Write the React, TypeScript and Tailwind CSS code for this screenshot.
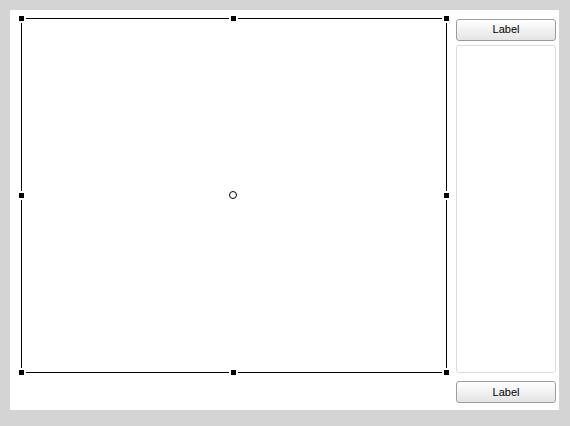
import React from "react";

function Handle({ pos }: { pos: string }) {
  return (
    <div className={`absolute w-[9px] h-[9px] p-[2px] bg-white ${pos}`}>
      <div className="w-[5px] h-[5px] bg-black" />
    </div>
  );
}

function Button({ label }: { label: string }) {
  return (
    <button className="h-[22px] w-full rounded-[3px] border border-[#9c9c9c] bg-gradient-to-b from-white to-[#e4e4e4] text-[11px] font-normal text-black leading-none">
      {label}
    </button>
  );
}

export default function App() {
  return (
    <div className="w-[570px] h-[426px] bg-[#d4d4d4] pt-[10px] pl-[10px] font-['Liberation_Sans',Arial,sans-serif]">
      <div className="w-[549px] h-[400px] bg-white flex">
        {/* Design surface */}
        <div className="w-[446px] h-full pl-[11px] pt-[8px]">
          <div className="relative w-[426px] h-[355px] border border-black">
            <Handle pos="left-[-5px] top-[-5px]" />
            <Handle pos="left-[207px] top-[-5px]" />
            <Handle pos="right-[-5px] top-[-5px]" />
            <Handle pos="left-[-5px] top-[172px]" />
            <Handle pos="right-[-5px] top-[172px]" />
            <Handle pos="left-[-5px] bottom-[-5px]" />
            <Handle pos="left-[207px] bottom-[-5px]" />
            <Handle pos="right-[-5px] bottom-[-5px]" />
            <div className="absolute left-[207px] top-[172px] w-[8px] h-[8px] rounded-full border-[1.5px] border-black" />
          </div>
        </div>

        {/* Side column */}
        <div className="w-[100px] flex flex-col pt-[9px] pb-[7px]">
          <Button label="Label" />
          <div className="mt-[4px] h-[330px] rounded-[3px] border border-[#dcdcdc] bg-white" />
          <div className="mt-[6px]">
            <Button label="Label" />
          </div>
        </div>
      </div>
    </div>
  );
}
